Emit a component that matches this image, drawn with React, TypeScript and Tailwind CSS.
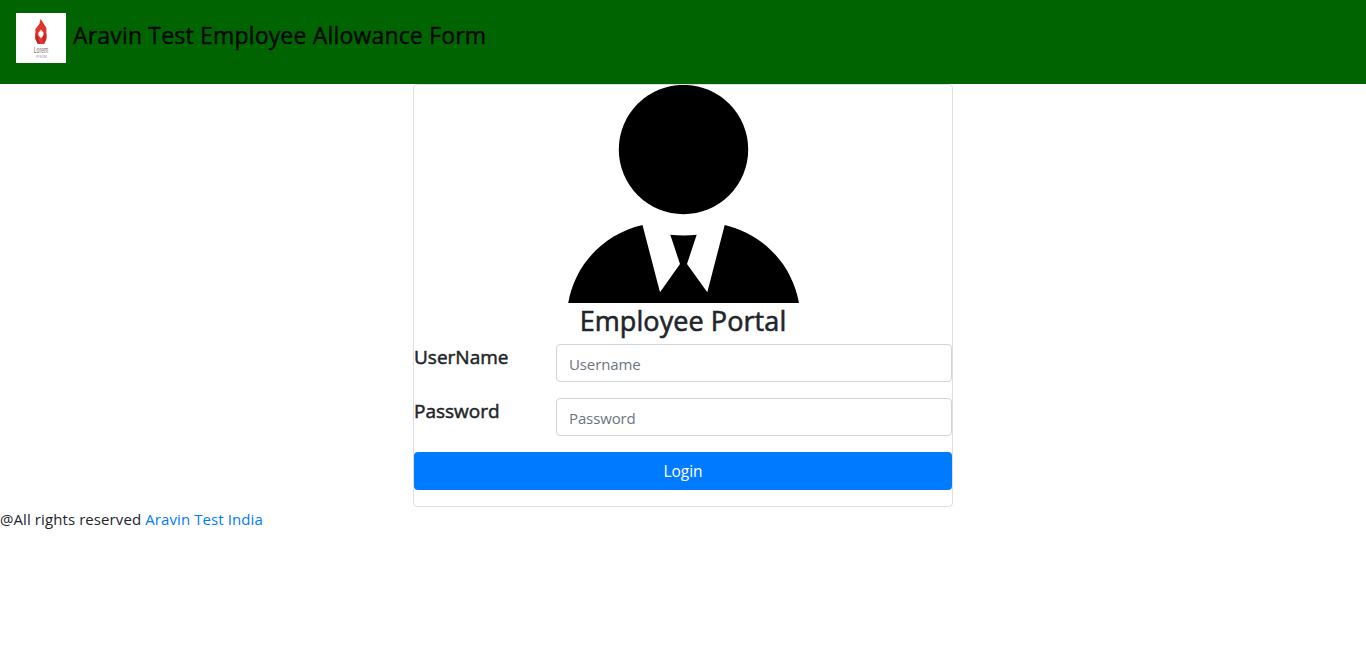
import React from 'react';

function BrandLogo() {
  return (
    <svg className="h-[50px] w-[50px] shrink-0" viewBox="0 0 50 50" role="img" aria-label="Lorem logo">
      <rect width="50" height="50" fill="#fff" />
      <path
        fillRule="evenodd"
        fill="#e3342b"
        d="M24.6 6L26 8L30.4 15V26L28 31H22L19.4 26V16L23.4 11ZM25 16.5C24 18.5 22.3 18.8 22.3 21S24 23.5 25 25.5C26 23.5 27.8 23.2 27.8 21S26 18.5 25 16.5Z"
      />
      <path fill="#bd231f" d="M19.4 20V26L22 31H24L22 25Z" />
      <path fill="#cb2a24" d="M28.2 19L30.4 21V26L28 31L26.5 26Z" />
      <text x="25" y="40.3" textAnchor="middle" textLength="14.4" lengthAdjust="spacingAndGlyphs" fontFamily="Liberation Sans, sans-serif" fontSize="9" fill="#707070">
        Lorem
      </text>
      <text x="25.3" y="45" textAnchor="middle" textLength="11" fontFamily="Liberation Sans, sans-serif" fontSize="3.4" fill="#999">
        IPSUM
      </text>
    </svg>
  );
}

function Avatar() {
  return (
    <svg className="ml-[154px] block h-[218px] w-[232px]" viewBox="0 0 232 218" aria-hidden="true">
      <circle cx="115.5" cy="64.6" r="64.7" />
      <path d="M0.2 218C7 179 36 149 74.5 140L92 207.3L112 179L102.3 149.8Q115.5 151.2 128.7 149.8L119 179L139.3 207.3L156.7 140C195 149 224 179 231 218Z" />
    </svg>
  );
}

function Field({ label, type, placeholder }: { label: string; type: string; placeholder: string }) {
  return (
    <div className="mb-4 flex">
      <label className="w-[142px] shrink-0 pt-px text-[19px] leading-6 [-webkit-text-stroke:0.5px_currentColor]">
        {label}
      </label>
      <input
        type={type}
        placeholder={placeholder}
        className="h-[38px] min-w-0 flex-1 rounded border border-[#ced4da] bg-white px-3 pt-[2px] text-[15px] tracking-[-0.12px] text-[#495057] outline-none placeholder:text-[#6c757d]"
      />
    </div>
  );
}

export default function App() {
  return (
    <div className="min-h-[657px] bg-white font-['Open_Sans','Noto_Sans',sans-serif] text-[#212529]">
      <header className="flex h-[84px] items-start gap-[7px] bg-[#006400] px-4 pt-[13px]">
        <BrandLogo />
        <h1 className="mt-2 text-[23px] leading-[29px] tracking-[0.18px] whitespace-nowrap text-black/90 [-webkit-text-stroke:0.5px_currentColor]">
          Aravin Test Employee Allowance Form
        </h1>
      </header>
      <main className="mx-auto h-[423px] w-[540px] rounded border border-black/[.125]">
        <Avatar />
        <h2 className="mb-[6px] pt-px text-center text-[27px] leading-[34px] tracking-[0.08px] [-webkit-text-stroke:0.6px_currentColor]">
          Employee Portal
        </h2>
        <Field label="UserName" type="text" placeholder="Username" />
        <Field label="Password" type="password" placeholder="Password" />
        <button className="h-[38px] w-full rounded bg-[#007bff] pt-[2px] text-[15.5px] text-white">Login</button>
      </main>
      <footer className="text-[15px] leading-6 tracking-[0.09px]">
        @All rights reserved <a className="text-[#007bff]">Aravin Test India</a>
      </footer>
    </div>
  );
}
